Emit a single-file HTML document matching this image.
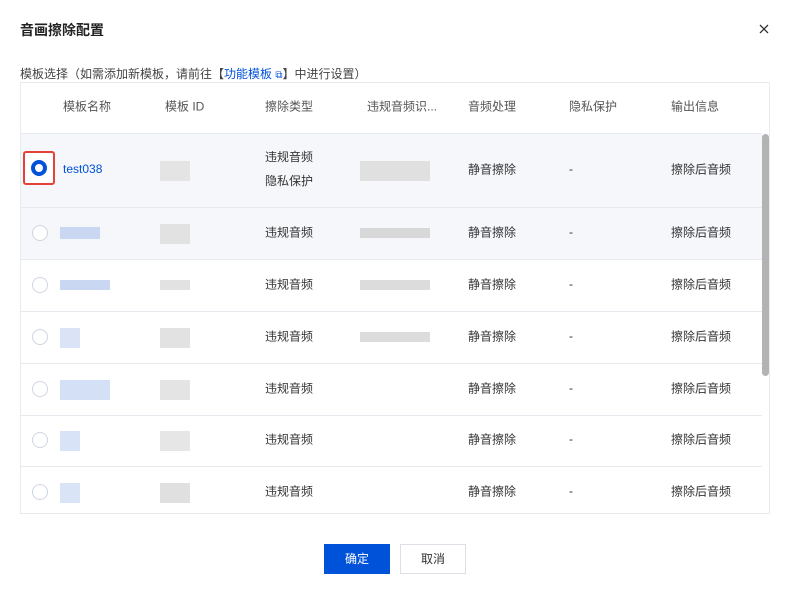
<!DOCTYPE html>
<html><head><meta charset="utf-8"><style>
*{margin:0;padding:0;box-sizing:border-box}
body{width:792px;height:593px;background:#fff;font-family:"Liberation Sans","Noto Sans CJK SC",sans-serif;font-size:12px;color:#333;position:relative;overflow:hidden}
.a{position:absolute;white-space:nowrap}
.row{position:absolute;left:0;width:741px;border-bottom:1px solid #e7eaef}
.c{position:absolute;top:50%;transform:translateY(-50%);margin-top:-2px;white-space:nowrap}
.radio{position:absolute;left:11px;top:50%;margin-top:-9px;width:16px;height:16px;border:1px solid #cfd5de;border-radius:50%;background:#fff}
.bl{position:absolute;top:50%;margin-top:-10px;height:20px}
#tbl{position:absolute;left:20px;top:82px;width:750px;height:432px;border:1px solid #e7eaef;overflow:hidden}
</style></head><body>
<div class="a" style="left:20px;top:20px;font-size:14px;font-weight:bold;color:#222">音画擦除配置</div>
<svg class="a" style="left:759px;top:24px" width="10" height="10" viewBox="0 0 10 10"><path d="M1 1L9 9M9 1L1 9" stroke="#333" stroke-width="1.3"/></svg>
<div class="a" style="left:20px;top:65px;color:#444">模板选择（如需添加新模板，请前往【<span style="color:#0052d9">功能模板 <span style="font-size:10px">⧉</span></span>】中进行设置）</div>
<div id="tbl">
<div class="row" style="top:0;height:51px;color:#555">
<span class="c" style="left:42px">模板名称</span><span class="c" style="left:144px">模板 ID</span><span class="c" style="left:244px">擦除类型</span><span class="c" style="left:346px">违规音频识...</span><span class="c" style="left:447px">音频处理</span><span class="c" style="left:548px">隐私保护</span><span class="c" style="left:650px">输出信息</span></div>
<div class="row" style="top:51px;height:74px;background:#f5f7fb">
<div style="position:absolute;left:2px;top:17px;width:32px;height:34px;border:2px solid #e5403a;border-radius:3px;background:#fff"></div>
<div style="position:absolute;left:10px;top:26px;width:16px;height:16px;border-radius:50%;border:4px solid #0052d9;background:#fff"></div>
<span class="c" style="left:42px;color:#0052d9">test038</span>
<div class="bl" style="left:139px;width:30px;background:#e4e4e4"></div>
<span class="c" style="left:244px;line-height:24px">违规音频<br>隐私保护</span>
<div class="bl" style="left:339px;width:70px;background:#e0e0e0"></div>
<span class="c" style="left:447px">静音擦除</span><span class="c" style="left:548px">-</span><span class="c" style="left:650px">擦除后音频</span></div>
<div class="row" style="top:125px;height:52px;background:#f5f7fb"><div class="radio"></div><div class="bl" style="left:39px;width:40px;height:12px;margin-top:-7px;background:#c9d7f3"></div><div class="bl" style="left:139px;width:30px;background:#e2e2e2"></div><span class="c" style="left:244px">违规音频</span><div class="bl" style="left:339px;width:70px;height:10px;margin-top:-6px;background:#d8d8d8"></div><span class="c" style="left:447px">静音擦除</span><span class="c" style="left:548px">-</span><span class="c" style="left:650px">擦除后音频</span></div>
<div class="row" style="top:177px;height:52px"><div class="radio"></div><div class="bl" style="left:39px;width:50px;height:10px;margin-top:-6px;background:#c9d7f3"></div><div class="bl" style="left:139px;width:30px;height:10px;margin-top:-6px;background:#e2e2e2"></div><span class="c" style="left:244px">违规音频</span><div class="bl" style="left:339px;width:70px;height:10px;margin-top:-6px;background:#dcdcdc"></div><span class="c" style="left:447px">静音擦除</span><span class="c" style="left:548px">-</span><span class="c" style="left:650px">擦除后音频</span></div>
<div class="row" style="top:229px;height:52px"><div class="radio"></div><div class="bl" style="left:39px;width:20px;background:#dbe4f6"></div><div class="bl" style="left:139px;width:30px;background:#e2e2e2"></div><span class="c" style="left:244px">违规音频</span><div class="bl" style="left:339px;width:70px;height:10px;margin-top:-6px;background:#dcdcdc"></div><span class="c" style="left:447px">静音擦除</span><span class="c" style="left:548px">-</span><span class="c" style="left:650px">擦除后音频</span></div>
<div class="row" style="top:281px;height:52px"><div class="radio"></div><div class="bl" style="left:39px;width:50px;background:#d4e0f6"></div><div class="bl" style="left:139px;width:30px;background:#e4e4e4"></div><span class="c" style="left:244px">违规音频</span><span class="c" style="left:447px">静音擦除</span><span class="c" style="left:548px">-</span><span class="c" style="left:650px">擦除后音频</span></div>
<div class="row" style="top:333px;height:51px"><div class="radio"></div><div class="bl" style="left:39px;width:20px;background:#d8e3f7"></div><div class="bl" style="left:139px;width:30px;background:#e6e6e6"></div><span class="c" style="left:244px">违规音频</span><span class="c" style="left:447px">静音擦除</span><span class="c" style="left:548px">-</span><span class="c" style="left:650px">擦除后音频</span></div>
<div class="row" style="top:384px;height:52px;border-bottom:none"><div class="radio"></div><div class="bl" style="left:39px;width:20px;background:#dae4f7"></div><div class="bl" style="left:139px;width:30px;background:#e0e0e0"></div><span class="c" style="left:244px">违规音频</span><span class="c" style="left:447px">静音擦除</span><span class="c" style="left:548px">-</span><span class="c" style="left:650px">擦除后音频</span></div>
</div>
<div class="a" style="left:762px;top:134px;width:7px;height:242px;background:#b3b3b3;border-radius:4px"></div>
<div class="a" style="left:324px;top:544px;width:66px;height:30px;background:#0052d9;color:#fff;text-align:center;line-height:30px">确定</div>
<div class="a" style="left:400px;top:544px;width:66px;height:30px;border:1px solid #dcdfe6;color:#333;text-align:center;line-height:28px">取消</div>
</body></html>
